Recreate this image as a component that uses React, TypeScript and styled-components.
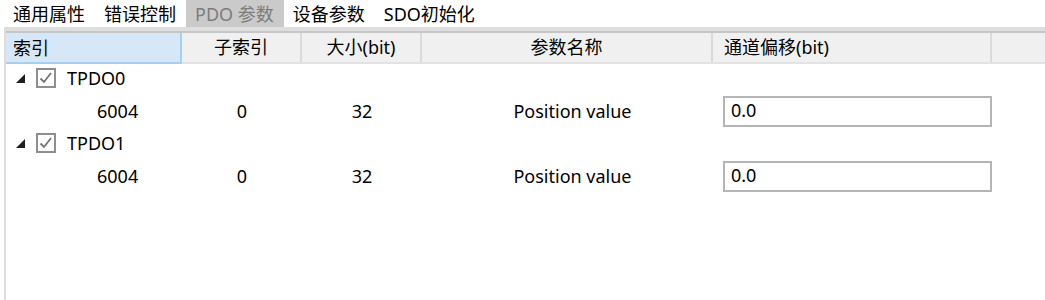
import * as React from "react";
import styled, { createGlobalStyle } from "styled-components";

const COLS = "176px 120px 120px 291px 279px 1fr";

const GlobalStyle = createGlobalStyle`
  html, body {
    margin: 0;
    padding: 0;
    background: #ffffff;
  }
  body {
    font-family: "Noto Sans", "Noto Sans CJK SC", sans-serif;
    font-size: 18px;
    color: #000000;
  }
`;

const tabs = ["通用属性", "错误控制", "PDO 参数", "设备参数", "SDO初始化"];

const groups = [
  { name: "TPDO0", index: "6004", sub: "0", size: "32", param: "Position value", offset: "0.0" },
  { name: "TPDO1", index: "6004", sub: "0", size: "32", param: "Position value", offset: "0.0" },
];

const Check = () => (
  <CheckBox>
    <svg width="16" height="16" viewBox="0 0 16 16">
      <polyline
        points="2.5,8.5 6,12 13,3"
        fill="none"
        stroke="#727272"
        strokeWidth="1.8"
      />
    </svg>
  </CheckBox>
);

const App = () => {
  const [active, setActive] = React.useState(2);

  return (
    <>
      <GlobalStyle />
      <Page>
        <TabStrip>
          {tabs.map((t, i) => (
            <Tab key={t} $active={i === active} onClick={() => setActive(i)}>
              {t}
            </Tab>
          ))}
        </TabStrip>
        <Grid>
          <Header>
            <HeadCell $selected>索引</HeadCell>
            <HeadCell $align="center">子索引</HeadCell>
            <HeadCell $align="center">大小(bit)</HeadCell>
            <HeadCell $align="center">参数名称</HeadCell>
            <HeadCell $pad={11}>通道偏移(bit)</HeadCell>
            <HeadCell />
          </Header>
          {groups.map((g) => (
            <React.Fragment key={g.name}>
              <GroupRow>
                <Expander width="9" height="9" viewBox="0 0 9 9">
                  <polygon points="9,0 9,9 0,9" fill="#1e1e1e" />
                </Expander>
                <Check />
                <GroupName>{g.name}</GroupName>
              </GroupRow>
              <Row>
                <Cell $pad={91}>{g.index}</Cell>
                <Cell $align="center">{g.sub}</Cell>
                <Cell $align="center">{g.size}</Cell>
                <Cell $align="center" $pad={10}>
                  {g.param}
                </Cell>
                <InputCell>
                  <OffsetInput defaultValue={g.offset} />
                </InputCell>
                <Cell />
              </Row>
            </React.Fragment>
          ))}
        </Grid>
      </Page>
    </>
  );
};

export default App;

const Page = styled.div`
  display: flex;
  flex-direction: column;
  height: 300px;
  overflow: hidden;
`;

const TabStrip = styled.div`
  display: flex;
  height: 27px;
  padding-left: 4px;
`;

const Tab = styled.div<{ $active?: boolean }>`
  display: flex;
  align-items: center;
  padding: 0 10px 2px 9px;
  cursor: pointer;
  white-space: nowrap;
  background: ${(p) => (p.$active ? "#cacaca" : "transparent")};
  color: ${(p) => (p.$active ? "#7c7c7c" : "#000000")};
`;

const Grid = styled.div`
  flex: 1;
  margin-left: 4px;
  border-left: 2px solid #dcdcdc;
  border-top: 4px solid #dedede;
  display: flex;
  flex-direction: column;
`;

const Header = styled.div`
  display: grid;
  grid-template-columns: ${COLS};
  height: 29px;
  background: #f0f0f0;
  border-top: 2px solid #c6c6c6;
  border-bottom: 2px solid #e3e3e3;
`;

const HeadCell = styled.div<{ $selected?: boolean; $align?: string; $pad?: number }>`
  display: flex;
  align-items: center;
  justify-content: ${(p) => (p.$align === "center" ? "center" : "flex-start")};
  padding-left: ${(p) => (p.$pad ?? (p.$align === "center" ? 0 : 7))}px;
  padding-bottom: 3px;
  border-right: 2px solid ${(p) => (p.$selected ? "#a6d0f2" : "#dadada")};
  background: ${(p) => (p.$selected ? "#d6e8f7" : "transparent")};
  box-shadow: ${(p) => (p.$selected ? "inset 0 -2px 0 #a6d0f2" : "none")};
  margin-bottom: ${(p) => (p.$selected ? "-2px" : "0")};
  white-space: nowrap;
  &:last-child {
    border-right: none;
  }
`;

const GroupRow = styled.div`
  display: flex;
  align-items: center;
  height: 33px;
  padding-left: 10px;
  padding-bottom: 5px;
  box-sizing: border-box;
`;

const Expander = styled.svg`
  flex: none;
  margin-right: 11px;
`;

const CheckBox = styled.div`
  flex: none;
  width: 16px;
  height: 16px;
  border: 2px solid #8e8e8e;
  background: #ffffff;
  display: flex;
  align-items: center;
  justify-content: center;
`;

const GroupName = styled.span`
  margin-left: 11px;
`;

const Row = styled.div`
  display: grid;
  grid-template-columns: ${COLS};
  height: 32px;
`;

const Cell = styled.div<{ $align?: string; $pad?: number }>`
  display: flex;
  align-items: center;
  justify-content: ${(p) => (p.$align === "center" ? "center" : "flex-start")};
  padding-left: ${(p) => p.$pad ?? 0}px;
  padding-bottom: 4px;
  white-space: nowrap;
`;

const InputCell = styled.div`
  display: flex;
  align-items: flex-start;
  padding-left: 10px;
`;

const OffsetInput = styled.input`
  box-sizing: border-box;
  width: 269px;
  height: 31px;
  margin-top: -1px;
  border: 2px solid #b5b5b5;
  padding: 0 0 3px 6px;
  font-family: "Noto Sans", "Noto Sans CJK SC", sans-serif;
  font-size: 18px;
  color: #000000;
  outline: none;
  background: #ffffff;
`;
